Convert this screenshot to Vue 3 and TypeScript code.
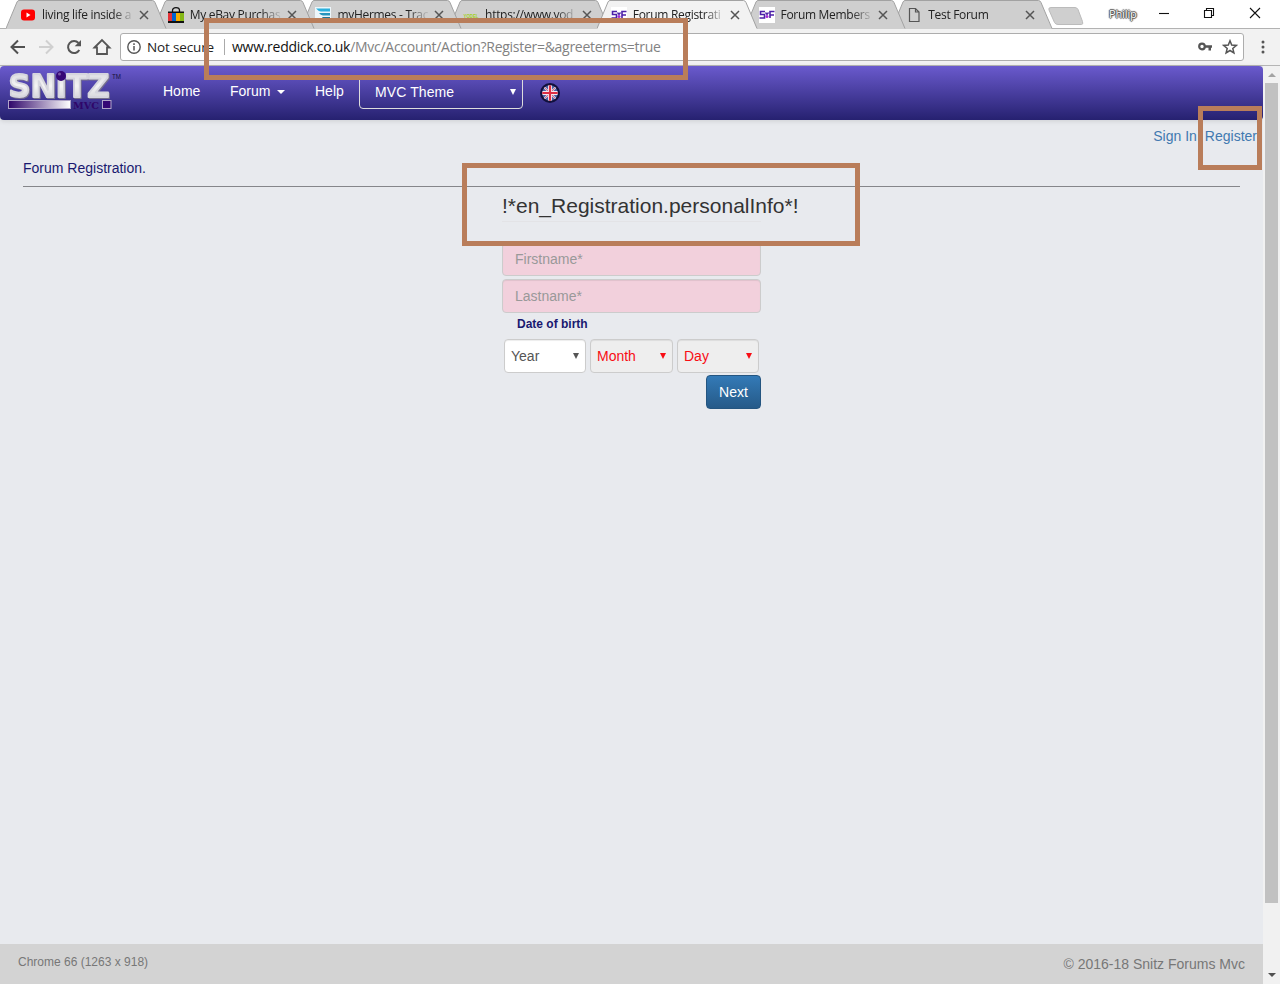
<script setup lang="ts">
interface Tab {
  title: string
  icon: 'youtube' | 'ebay' | 'hermes' | 'yodel' | 'snitz' | 'page'
  active?: boolean
}

const tabs: Tab[] = [
  { title: 'living life inside a', icon: 'youtube' },
  { title: 'My eBay Purchas', icon: 'ebay' },
  { title: 'myHermes - Trac', icon: 'hermes' },
  { title: 'https://www.yod', icon: 'yodel' },
  { title: 'Forum Registrati', icon: 'snitz', active: true },
  { title: 'Forum Members', icon: 'snitz' },
  { title: 'Test Forum', icon: 'page' },
]

const dateParts = [
  { label: 'Year', disabled: false },
  { label: 'Month', disabled: true },
  { label: 'Day', disabled: true },
]
</script>

<template>
  <div class="window">
    <div class="tabstrip">
      <div
        v-for="(tab, i) in tabs"
        :key="tab.title"
        class="tab"
        :class="{ active: tab.active }"
        :style="{ zIndex: tab.active ? 20 : 10 - i }"
      >
        <svg class="tab-shape" width="161" height="29" viewBox="0 0 161 29">
          <path class="fill" d="M0 29L11 2Q11.800 .5 13 .5H146.500Q148 .5 149 2.500L160 29Z" />
          <path class="edge" d="M0 28.500L11 2Q11.800 .5 13 .5H146.500Q148 .5 149 2.500L160 28.500" />
        </svg>
        <svg class="favicon" width="16" height="16" viewBox="0 0 16 16">
          <g v-if="tab.icon === 'youtube'">
            <rect x="1" y="2.500" width="14" height="11" rx="3" fill="#f00" />
            <path d="M6.500 5.500v5l4-2.500z" fill="#fff" />
          </g>
          <g v-else-if="tab.icon === 'ebay'">
            <path d="M4.500 6V3.500Q4.500 .7 8 .7T11.500 3.500V6" fill="none" stroke="#111" stroke-width="1.300" />
            <path d="M0 4.500h16v2H0zM0 14h16v2H0z" fill="#111" />
            <path d="M0 6h4v8H0z" fill="#e43137" /><path d="M4 6h4v8H4z" fill="#0064d2" />
            <path d="M8 6h4v8H8z" fill="#f5af02" /><path d="M12 6h4v8h-4z" fill="#86b817" />
          </g>
          <g v-else-if="tab.icon === 'hermes'">
            <rect width="16" height="16" fill="#edf6fa" />
            <path d="M1 1.500h14v3H6Q3 4 1 1.500z" fill="#2bb0dc" />
            <path d="M4 6h11v2.500H8Q5.500 8 4 6z" fill="#2795bd" />
            <path d="M7 10h8v3.500h-4Q8 12.500 7 10z" fill="#1f7698" />
          </g>
          <text v-else-if="tab.icon === 'yodel'" x="0.500" y="10.500" class="yodel" textLength="15" lengthAdjust="spacingAndGlyphs">YODEL</text>
          <g v-else-if="tab.icon === 'snitz'">
            <rect width="16" height="16" fill="#fff" />
            <path d="M6 4.500H1.500V7.500H5.500V11H.5M15.500 4.500H11V11M11 8h4" fill="none" stroke="#4c20a8" stroke-width="1.600" />
            <path d="M6.500 5.500l1.500 2 1.500-2" fill="none" stroke="#4c20a8" stroke-width="1.300" />
            <circle cx="8" cy="9.500" r="1.500" fill="#a22ad4" />
          </g>
          <path v-else d="M3.500 1.500h6l3.500 3.500v9.500H3.500zM9.500 1.500V5H13" fill="none" stroke="#555" stroke-width="1.200" />
        </svg>
        <span class="tab-title">{{ tab.title }}</span>
        <svg class="tab-close" width="10" height="10" viewBox="0 0 10 10"><path d="M1 1l8 8M9 1L1 9" stroke="#555" stroke-width="1.500" /></svg>
      </div>
      <svg class="new-tab" width="36" height="19" viewBox="0 0 36 19"><path d="M3 .5h24q2 0 3 2l4.500 12q1 3-1 3H10q-2.500 0-3.500-2L1 3Q0 .5 3 .5z" fill="#cfcfcf" stroke="#bbb" /></svg>
      <span class="profile">Philip</span>
      <svg class="win-controls" width="104" height="14" viewBox="0 0 104 14">
        <g fill="none" stroke="#111" stroke-width="1.100">
          <path d="M1 7.500h10" />
          <path d="M46.500 4.500h7v7h-7zM48.500 4.500v-2h7v7h-2" />
          <path d="M92 2l10 10M102 2L92 12" />
        </g>
      </svg>
    </div>

    <div class="toolbar">
      <svg class="nav-icon" width="20" height="20" viewBox="0 0 20 20"><path d="M17 10H4M10 3.500L3.500 10L10 16.500" fill="none" stroke="#505050" stroke-width="2" /></svg>
      <svg class="nav-icon" width="20" height="20" viewBox="0 0 20 20"><path d="M3 10H16M10 3.500L16.500 10L10 16.500" fill="none" stroke="#d0d0d0" stroke-width="2" /></svg>
      <svg class="nav-icon" width="20" height="20" viewBox="0 0 20 20"><path d="M15.300 13A6 6 0 1 1 14.500 6" fill="none" stroke="#555" stroke-width="2" /><path d="M17 3v6.300h-6.300z" fill="#555" /></svg>
      <svg class="nav-icon" width="20" height="20" viewBox="0 0 20 20"><path d="M2.500 10.500L10 3l7.500 7.500H15v6.500H5v-6.500z" fill="none" stroke="#555" stroke-width="1.800" /></svg>
      <div class="omnibox">
        <svg class="info" width="14" height="14" viewBox="0 0 14 14"><circle cx="7" cy="7" r="6.200" fill="none" stroke="#555" stroke-width="1.400" /><path d="M7 6v4.500M7 3.300v1.600" stroke="#555" stroke-width="1.500" /></svg>
        <span class="not-secure">Not secure</span>
        <span class="divider"></span>
        <span class="url"><span class="host">www.reddick.co.uk</span>/Mvc/Account/Action?Register=&amp;agreeterms=true</span>
        <svg class="key" width="14" height="10" viewBox="0 0 14 10"><circle cx="4" cy="4.500" r="2.800" fill="none" stroke="#555" stroke-width="2.200" /><path d="M7 3.300h7v2.500h-1v2.700h-2.500V5.800H7z" fill="#555" /></svg>
        <svg class="star" width="16" height="16" viewBox="0 0 16 16"><path d="M8 1.800l1.700 4.300 4.600.3-3.500 3 1.100 4.500L8 11.500l-3.900 2.400 1.100-4.500-3.500-3 4.600-.3z" fill="none" stroke="#555" stroke-width="1.500" /></svg>
      </div>
      <svg class="menu" width="4" height="14" viewBox="0 0 4 14"><circle cx="2" cy="2" r="1.500" /><circle cx="2" cy="7" r="1.500" /><circle cx="2" cy="12" r="1.500" /></svg>
    </div>

    <div class="viewport">
      <div class="page">
        <nav class="navbar">
          <svg class="logo" width="118" height="42" viewBox="0 0 118 42">
            <defs>
              <linearGradient id="silver" x1="0" y1="0" x2="0" y2="1"><stop offset="0" stop-color="#d0d0d8" /><stop offset=".5" stop-color="#f4f4f4" /><stop offset="1" stop-color="#c5c5cd" /></linearGradient>
              <linearGradient id="fade"><stop offset="0" stop-color="#2f0669" /><stop offset="1" stop-color="#fff" /></linearGradient>
            </defs>
            <text x="1.500" y="27" class="logo-word" textLength="101" lengthAdjust="spacingAndGlyphs">SNıTZ</text>
            <circle cx="54" cy="6" r="5" fill="#360876" />
            <circle cx="52.500" cy="4" r="1.500" fill="#7755a5" />
            <text x="105" y="8.500" class="logo-tm" textLength="9" lengthAdjust="spacingAndGlyphs">TM</text>
            <rect x="1.500" y="30.500" width="62" height="8" fill="url(#fade)" stroke="#b0a5c9" />
            <text x="66" y="38.500" class="logo-mvc" textLength="26" lengthAdjust="spacingAndGlyphs">MVC</text>
            <rect x="95.500" y="30.500" width="8.500" height="8" fill="#360876" stroke="#b0a5c9" />
          </svg>
          <a class="nav-link home">Home</a>
          <a class="nav-link forum">Forum <i class="caret"></i></a>
          <a class="nav-link help">Help</a>
          <div class="theme-select">MVC Theme<i class="arrow"></i></div>
          <svg class="flag" width="20" height="20" viewBox="0 0 20 20">
            <defs><clipPath id="disc"><circle cx="10" cy="10" r="7.800" /></clipPath></defs>
            <circle cx="10" cy="10" r="10" fill="#12103c" />
            <g clip-path="url(#disc)">
              <rect width="20" height="20" fill="#4a63a8" />
              <path d="M2 2l16 16M18 2L2 18" stroke="#d9d3e4" stroke-width="2" />
              <path d="M2 2l16 16M18 2L2 18" stroke="#d5546d" stroke-width=".8" />
              <path d="M10 0v20M0 10h20" stroke="#f4eaf0" stroke-width="4" />
              <path d="M10 0v20M0 10h20" stroke="#dc2e44" stroke-width="2.200" />
            </g>
          </svg>
        </nav>

        <div class="account"><a>Sign In</a><a>Register</a></div>
        <h1 class="page-title">Forum Registration.</h1>

        <form class="form" @submit.prevent>
          <div class="legend">!*en_Registration.personalInfo*!</div>
          <input class="field" type="text" placeholder="Firstname*" />
          <input class="field" type="text" placeholder="Lastname*" />
          <div class="dob-label">Date of birth</div>
          <div class="dob">
            <div v-for="part in dateParts" :key="part.label" class="select" :class="{ disabled: part.disabled }">
              {{ part.label }}<i class="arrow"></i>
            </div>
          </div>
          <button class="next" type="button">Next</button>
        </form>

        <footer class="footer">
          <span class="agent">Chrome 66 (1263 x 918)</span>
          <span class="copyright">© 2016-18 Snitz Forums Mvc</span>
        </footer>
      </div>
      <div class="scrollbar">
        <i class="scroll-up"></i>
        <div class="thumb"></div>
        <i class="scroll-down"></i>
      </div>
    </div>

    <div class="mark mark-url"></div>
    <div class="mark mark-heading"></div>
    <div class="mark mark-register"></div>
  </div>
</template>

<style>
body { margin: 0; overflow: hidden; }
</style>

<style scoped>
* { box-sizing: border-box; }
.window { position: relative; width: 1280px; height: 984px; display: flex; flex-direction: column; background: #fff; font-family: "Liberation Sans", Arial, sans-serif; overflow: hidden; }

.tabstrip { height: 29px; display: flex; align-items: flex-start; padding-left: 6px; border-bottom: 1px solid #b2b2b2; flex: none; }
.tab { position: relative; width: 161px; height: 29px; margin-right: -13.300px; padding-left: 14px; display: flex; align-items: center; flex: none; }
.tab-shape { position: absolute; left: 0; top: 0; z-index: -1; }
.fill { fill: #cfcfcf; }
.edge { fill: none; stroke: #a2a2a2; }
.active .fill { fill: #f2f2f2; }
.favicon { flex: none; margin-right: 6px; overflow: visible; }
.tab-title { width: 91px; font: 12px/18px "Open Sans", sans-serif; letter-spacing: -.3px; color: #222; white-space: nowrap; -webkit-mask-image: linear-gradient(90deg, #000 78%, transparent 102%); mask-image: linear-gradient(90deg, #000 78%, transparent 102%); }
.tab-close { margin-left: 6px; flex: none; }
.yodel { font: bold 6px "Liberation Sans", sans-serif; fill: #a3cf20; }
.new-tab { margin: 7px 0 0 8px; flex: none; }
.profile { width: 28px; margin: 6px 0 0 25px; font: 11px/15px "Open Sans", sans-serif; color: #fff; letter-spacing: -.1px; text-shadow: 0 0 1px #333, 1px 0 1px #555, -1px 0 1px #555, 0 1px 1px #555, 0 -1px 1px #555; }
.win-controls { margin: 6px 0 0 21px; flex: none; }

.toolbar { height: 37px; flex: none; background: #f2f2f2; border-bottom: 1px solid #b5b5b5; display: flex; align-items: center; padding-left: 8px; }
.nav-icon { margin-right: 8px; flex: none; }
.omnibox { width: 1124px; height: 28px; flex: none; background: #fff; border: 1px solid #adadad; border-radius: 3px; display: flex; align-items: center; padding-left: 6px; font: 14px/20px "Open Sans", sans-serif; color: #222; }
.info { margin-right: 6px; }
.not-secure { width: 71px; font-size: 13.500px; letter-spacing: -.15px; white-space: nowrap; }
.divider { width: 1px; height: 16px; margin: 0 7px 0 6px; background: #aaa; }
.url { flex: 1; color: #828282; letter-spacing: -.28px; white-space: nowrap; }
.host { color: #111; }
.key { margin-right: 10px; }
.star { margin-right: 5px; }
.menu { margin-left: 16.500px; fill: #555; }

.viewport { flex: 1; display: flex; min-height: 0; background: #f2f2f2; }
.page { width: 1263px; background: #e8eaee; display: flex; flex-direction: column; }
.navbar { height: 54px; flex: none; border-radius: 4px; background: linear-gradient(#6a5acd, #262170); box-shadow: 0 1px 5px rgba(0, 0, 0, .12); display: flex; align-items: flex-start; color: #fff; font-size: 14px; line-height: 20px; }
.logo { margin: 4px 0 0 7px; flex: none; overflow: visible; }
.logo-word { font: bold 32px "DejaVu Sans", sans-serif; fill: url(#silver); stroke: #d6d6de; stroke-width: 2px; stroke-linejoin: round; filter: drop-shadow(1px 1px 0 #77718d); }
.logo-tm { font: 7px "Liberation Sans", sans-serif; fill: #17123b; }
.logo-mvc { font: bold 9px "DejaVu Serif", serif; fill: #2f0669; }
.nav-link { margin-top: 15px; white-space: nowrap; }
.home { margin-left: 38px; width: 67px; }
.forum { width: 85px; display: flex; align-items: center; gap: 6.500px; }
.help { width: 44px; }
.caret { border: 4px solid transparent; border-top-color: #fff; border-bottom: 0; margin-top: 2px; }
.theme-select { width: 164px; height: 34px; margin-top: 9px; padding: 0 6px 0 15px; border: 1px solid #ddd; border-radius: 4px; display: flex; align-items: center; justify-content: space-between; letter-spacing: .1px; }
.arrow { width: 0; height: 0; border: 3.500px solid transparent; border-top: 6px solid currentColor; border-bottom: 0; }
.flag { margin: 17px 0 0 17px; }

.account { display: flex; justify-content: flex-end; gap: 8px; padding: 6px 6px 0 0; height: 32px; flex: none; font-size: 14px; line-height: 20px; color: #4179b0; }
.page-title { margin: 0 23px; height: 35px; flex: none; padding-top: 6px; border-bottom: 1px solid #85868a; font-size: 14px; line-height: 20px; font-weight: normal; color: #191970; }
.form { width: 259px; margin-left: 502px; flex: 1; display: flex; flex-direction: column; }
.legend { height: 35px; margin-bottom: 20px; flex: none; border-bottom: 1px solid #e3e3e6; font-size: 21px; line-height: 38px; color: #333; white-space: nowrap; }
.field { height: 34px; flex: none; margin: 0 0 3px; padding: 6px 12px; border: 1px solid #ccc; border-radius: 4px; background: #f2d0dc; box-shadow: inset 0 1px 1px rgba(0, 0, 0, .075); font: 14px/20px "Liberation Sans", Arial, sans-serif; }
.field::placeholder { color: #999; opacity: 1; }
.dob-label { height: 23px; margin-left: 15px; font-size: 12px; line-height: 16px; font-weight: bold; color: #191970; }
.dob { display: grid; grid-template-columns: 82px 83px 82px; gap: 4px; margin: 0 2px 2px; }
.select { height: 34px; padding: 0 6px; border: 1px solid #ccc; border-radius: 4px; background: #fff; box-shadow: inset 0 1px 1px rgba(0, 0, 0, .075); display: flex; align-items: center; justify-content: space-between; font-size: 14px; color: #555; }
.select.disabled { background: #eee; color: #f80d14; }
.next { align-self: flex-end; width: 55px; height: 34px; padding: 0; border: 1px solid #245580; border-radius: 4px; background: linear-gradient(#337ab7, #265a88); color: #fff; font: 14px/20px "Liberation Sans", Arial, sans-serif; }
.footer { height: 40px; flex: none; background: #d3d3d3; color: #777; display: flex; justify-content: space-between; padding: 0 18px; }
.agent { font-size: 12px; line-height: 36px; }
.copyright { font-size: 14px; line-height: 40px; }

.scrollbar { width: 17px; display: flex; flex-direction: column; align-items: center; background: #f1f1f1; }
.scroll-up { margin: 7px 0 6px; border: 4px solid transparent; border-bottom-color: #a3a3a3; border-top: 0; }
.thumb { width: 13px; height: 820px; background: #c1c1c1; }
.scroll-down { margin-top: 70px; border: 4px solid transparent; border-top-color: #505050; border-bottom: 0; }

.mark { position: absolute; border: 5px solid #b97d5a; z-index: 50; }
.mark-url { left: 204px; top: 18px; width: 484px; height: 62px; }
.mark-heading { left: 462px; top: 163px; width: 398px; height: 83px; }
.mark-register { left: 1198px; top: 106px; width: 64px; height: 64px; }
</style>
